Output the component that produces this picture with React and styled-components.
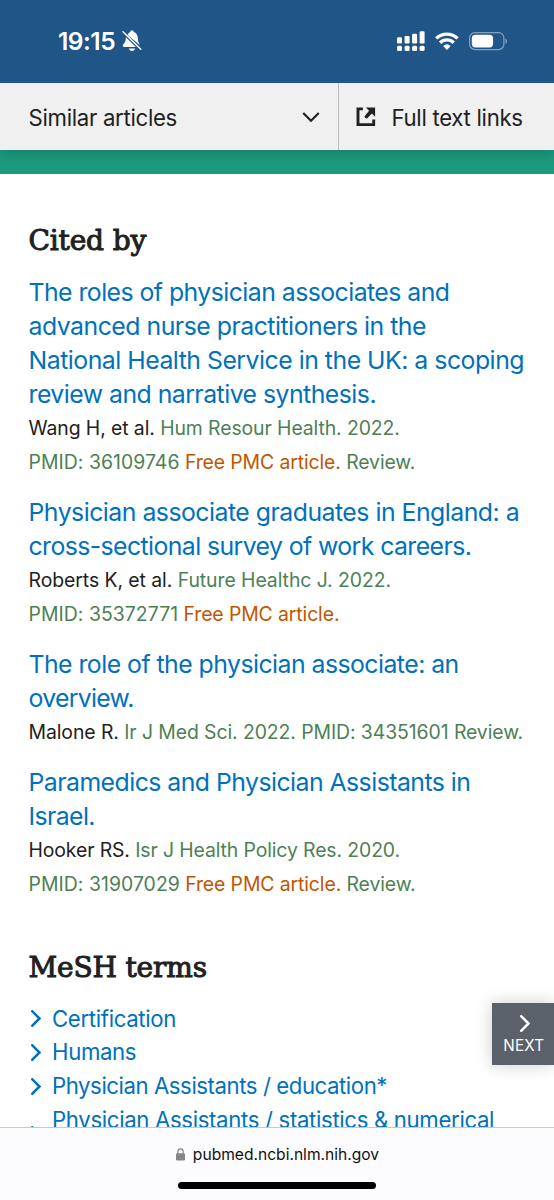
import React from "react";
import styled, { createGlobalStyle } from "styled-components";

const GlobalStyle = createGlobalStyle`
  * {
    box-sizing: border-box;
  }
  body {
    margin: 0;
    background: #fff;
    color: #212121;
    font-family: Inter, "Liberation Sans", sans-serif;
  }
`;

const Screen = styled.div`
  width: 554px;
  height: 1200px;
  display: flex;
  flex-direction: column;
  overflow: hidden;
`;

const StatusBar = styled.header`
  position: relative;
  z-index: 1;
  flex: none;
  height: 83px;
  padding: 0 46px 1px 58px;
  display: flex;
  align-items: center;
  justify-content: space-between;
  background: #205587;
  color: #fff;
`;

const Clock = styled.div`
  display: flex;
  align-items: center;
  gap: 7px;
  font-size: 24.5px;
  font-weight: 600;
  letter-spacing: -0.5px;
`;

const Toolbar = styled.nav`
  position: relative;
  flex: none;
  height: 67px;
  display: flex;
  background: #f0f0f0;
  box-shadow: 0 1px 14px rgba(0, 0, 0, 0.24);
  font-size: 22.2px;
`;

const ToolbarButton = styled.div`
  width: ${({ $width }) => $width}px;
  padding: 1px 18px 0 ${({ $left }) => $left}px;
  display: flex;
  align-items: center;
  justify-content: ${({ $spread }) => ($spread ? "space-between" : "flex-start")};
  gap: 16px;
  white-space: nowrap;
  letter-spacing: ${({ $track }) => $track}px;
  & + & {
    border-left: 1px solid #bcbcbc;
  }
`;

const Stripe = styled.div`
  flex: none;
  height: 24px;
  background: #1c9a7d;
`;

const Content = styled.main`
  flex: 1;
  min-height: 0;
  overflow: hidden;
  padding: 0 0 0 28.5px;
`;

const Heading = styled.h2`
  margin: 0;
  height: ${({ $height }) => $height}px;
  padding-top: ${({ $top }) => $top}px;
  font-family: "DejaVu Serif", serif;
  font-size: 28px;
  line-height: 34px;
  font-weight: 400;
  -webkit-text-stroke: 1px #212121;
  letter-spacing: ${({ $track }) => $track}px;
`;

const Articles = styled.ul`
  margin: 0;
  padding: 0;
  list-style: none;
  display: flex;
  flex-direction: column;
  gap: 15.9px;
`;

const Line = styled.span`
  display: block;
  white-space: nowrap;
  line-height: 33.8px;
  letter-spacing: ${({ $track = 0 }) => $track}px;
`;

const ArticleTitle = styled.a`
  display: block;
  color: #0071bc;
  font-size: 24.8px;
`;

const Meta = styled.div`
  padding-top: 0.9px;
  font-size: 19.4px;
  color: #4d8055;
`;

const Authors = styled.span`
  color: #212121;
`;

const Pmid = styled.span`
  letter-spacing: 0.05px;
`;

const Free = styled.span`
  color: #c05600;
`;

const Terms = styled.ul`
  margin: 0;
  padding: 0;
  list-style: none;
  font-size: 22.2px;
  color: #0071bc;
`;

const Term = styled.li`
  height: ${({ $rows }) => $rows * 33.8}px;
  display: flex;
  align-items: center;
  padding-left: 2.5px;
  gap: 11px;
  ${Line} {
    align-self: flex-start;
  }
`;

const NextButton = styled.div`
  position: absolute;
  left: 491.5px;
  top: 1003px;
  width: 62.5px;
  height: 62px;
  padding: 12px 0 0 2px;
  display: flex;
  flex-direction: column;
  align-items: center;
  gap: 4px;
  background: #5b616b;
  box-shadow: 0 0 16px rgba(0, 0, 0, 0.2);
  color: #fff;
  font-size: 15.2px;
  line-height: 19px;
  letter-spacing: 0.2px;
  svg {
    margin-left: 2px;
  }
`;

const AddressBar = styled.footer`
  position: relative;
  flex: none;
  height: 73px;
  display: flex;
  flex-direction: column;
  align-items: center;
  padding-top: 15px;
  border-top: 1px solid #c9c9cb;
  background: #fcfcfe;
  color: #111;
`;

const Url = styled.div`
  display: flex;
  align-items: center;
  gap: 8px;
  height: 22px;
  padding-left: 1px;
  font-size: 15.6px;
`;

const HomeIndicator = styled.div`
  width: 198px;
  height: 7px;
  margin-top: 17px;
  border-radius: 4px;
  background: #000;
`;

const Chevron = ({ width = 10, height = 17, d = "M1.3 1.3 8.5 8.5 1.3 15.7", stroke = 2.5 }) => (
  <svg width={width} height={height} viewBox={`0 0 ${width} ${height}`} fill="none">
    <path d={d} stroke="currentColor" strokeWidth={stroke} strokeLinecap="square" />
  </svg>
);

const BellOff = () => (
  <svg width="20" height="22" viewBox="0 0 20 22" fill="#fff">
    <path d="M5.6 5C6.200 3.400 7.100 2.500 8.300 2.100 8.400 1 9 .3 10 .3s1.600.7 1.700 1.800c2.600.8 4 3 4.100 6 .1 3 .6 4.200 1.500 5.600.2.400.4.900.4 1.300L5.600 5Z" />
    <path d="M3.900 7.200 13.800 17H2.200c-1 0-1.500-.5-1.500-1.200 0-1.200 1.500-2 2.200-3.500.7-1.500.9-3 1-5.100Z" />
    <path d="M6.900 18.400h6.200c-.3 1.500-1.500 2.500-3.100 2.500s-2.800-1-3.100-2.500Z" />
    <path d="M1 1.800 18.800 19.200" stroke="#fff" strokeWidth="1.400" strokeLinecap="round" />
  </svg>
);

const StatusIcons = () => (
  <svg width="112" height="24" viewBox="396 29 112 24" fill="#fff">
    <rect x="397" y="37.200" width="5" height="6.300" rx="1.200" />
    <rect x="404.600" y="36" width="5" height="7.500" rx="1.200" />
    <rect x="412.100" y="33.700" width="5" height="9.800" rx="1.200" />
    <rect x="419.600" y="31.200" width="5" height="12.300" rx="1.200" />
    <rect x="397" y="45.700" width="5" height="5.200" rx="1.500" />
    <rect x="404.600" y="45.700" width="5" height="5.200" rx="1.500" />
    <rect x="412.100" y="45.700" width="5" height="5.200" rx="1.500" />
    <rect x="419.600" y="45.700" width="5" height="5.200" rx="1.500" />
    <g fill="none" stroke="#fff" strokeWidth="3.300">
      <path d="M436.200 38.400a15.400 15.400 0 0 1 21.400 0" />
      <path d="M440.100 42.700a9.800 9.800 0 0 1 13.600 0" />
    </g>
    <path d="M443.200 46a5.600 5.600 0 0 1 7.400 0l-3.700 4Z" />
    <rect x="469.600" y="32.600" width="34.300" height="17" rx="5.400" fill="none" stroke="#fff" strokeOpacity=".45" strokeWidth="1.200" />
    <rect x="471.800" y="34.800" width="21.300" height="12.600" rx="3.600" />
    <path d="M505.500 38.500c1.800.8 1.800 4.700 0 5.500Z" fillOpacity=".5" />
  </svg>
);

const ExternalLink = () => (
  <svg width="20" height="20" viewBox="0 0 20 20">
    <path d="M6.900 1.900H2v15.700h15.700v-5.100" fill="none" stroke="#212121" strokeWidth="2.900" />
    <path d="M9.900.5h9.200v9.200l-3.200-3.100-4.600 4.700c-1 1-3.400-1.300-2.500-2.400l4.300-5.100Z" fill="#212121" />
  </svg>
);

const Lock = () => (
  <svg width="9" height="13" viewBox="0 0 9 13">
    <rect x="0" y="5.300" width="9" height="7.200" rx="1.200" fill="#858587" />
    <path d="M1.900 6V3.500a2.600 2.600 0 0 1 5.200 0V6" fill="none" stroke="#858587" strokeWidth="1.200" />
  </svg>
);

const articles = [
  {
    title: [
      ["The roles of physician associates and", -0.54],
      ["advanced nurse practitioners in the", -0.49],
      ["National Health Service in the UK: a scoping", -0.49],
      ["review and narrative synthesis.", -0.52],
    ],
    authors: "Wang H, et al.",
    journal: "Hum Resour Health. 2022.",
    pmid: "PMID: 36109746",
    free: true,
    review: true,
    track: [-0.09, -0.1],
  },
  {
    title: [
      ["Physician associate graduates in England: a", -0.5],
      ["cross-sectional survey of work careers.", -0.58],
    ],
    authors: "Roberts K, et al.",
    journal: "Future Healthc J. 2022.",
    pmid: "PMID: 35372771",
    free: true,
    track: [-0.06, -0.1],
  },
  {
    title: [
      ["The role of the physician associate: an", -0.53],
      ["overview.", -0.7],
    ],
    authors: "Malone R.",
    journal: "Ir J Med Sci. 2022. PMID: 34351601 Review.",
    track: [-0.08],
  },
  {
    title: [
      ["Paramedics and Physician Assistants in", -0.53],
      ["Israel.", -0.6],
    ],
    authors: "Hooker RS.",
    journal: "Isr J Health Policy Res. 2020.",
    pmid: "PMID: 31907029",
    free: true,
    review: true,
    track: [-0.11, -0.1],
  },
];

const terms = [
  ["Certification", -0.34, 1],
  ["Humans", -0.35, 1],
  ["Physician Assistants / education*", -0.44, 1],
  ["Physician Assistants / statistics & numerical", -0.34, 1.85],
];

function Article({ item }) {
  return (
    <li>
      <ArticleTitle>
        {item.title.map(([text, track]) => (
          <Line key={text} $track={track}>
            {text}
          </Line>
        ))}
      </ArticleTitle>
      <Meta>
        <Line $track={item.track[0]}>
          <Authors>{item.authors}</Authors> {item.journal}
        </Line>
        {item.pmid && (
          <Line $track={item.track[1]}>
            <Pmid>{item.pmid}</Pmid> {item.free && <Free>Free PMC article.</Free>}
            {item.review && " Review."}
          </Line>
        )}
      </Meta>
    </li>
  );
}

function App() {
  return (
    <Screen>
      <GlobalStyle />
      <StatusBar>
        <Clock>
          19:15
          <BellOff />
        </Clock>
        <StatusIcons />
      </StatusBar>
      <Toolbar>
        <ToolbarButton $width={338} $left={28.5} $spread $track={-0.3}>
          Similar articles
          <Chevron width={18} height={11} d="M2 1.800 9 8.800 16 1.800" stroke={2.2} />
        </ToolbarButton>
        <ToolbarButton $width={216} $left={16.5} $track={-0.3}>
          <ExternalLink />
          Full text links
        </ToolbarButton>
      </Toolbar>
      <Stripe />
      <Content>
        <Heading $height={102.3} $top={50} $track={-0.15}>
          Cited by
        </Heading>
        <Articles>
          {articles.map((item) => (
            <Article key={item.authors} item={item} />
          ))}
        </Articles>
        <Heading $height={99.5} $top={49} $track={-0.15}>
          MeSH terms
        </Heading>
        <Terms>
          {terms.map(([text, track, rows]) => (
            <Term key={text} $rows={rows}>
              <Chevron />
              <Line $track={track}>{text}</Line>
            </Term>
          ))}
        </Terms>
      </Content>
      <NextButton>
        <Chevron />
        NEXT
      </NextButton>
      <AddressBar>
        <Url>
          <Lock />
          pubmed.ncbi.nlm.nih.gov
        </Url>
        <HomeIndicator />
      </AddressBar>
    </Screen>
  );
}

export default App;
